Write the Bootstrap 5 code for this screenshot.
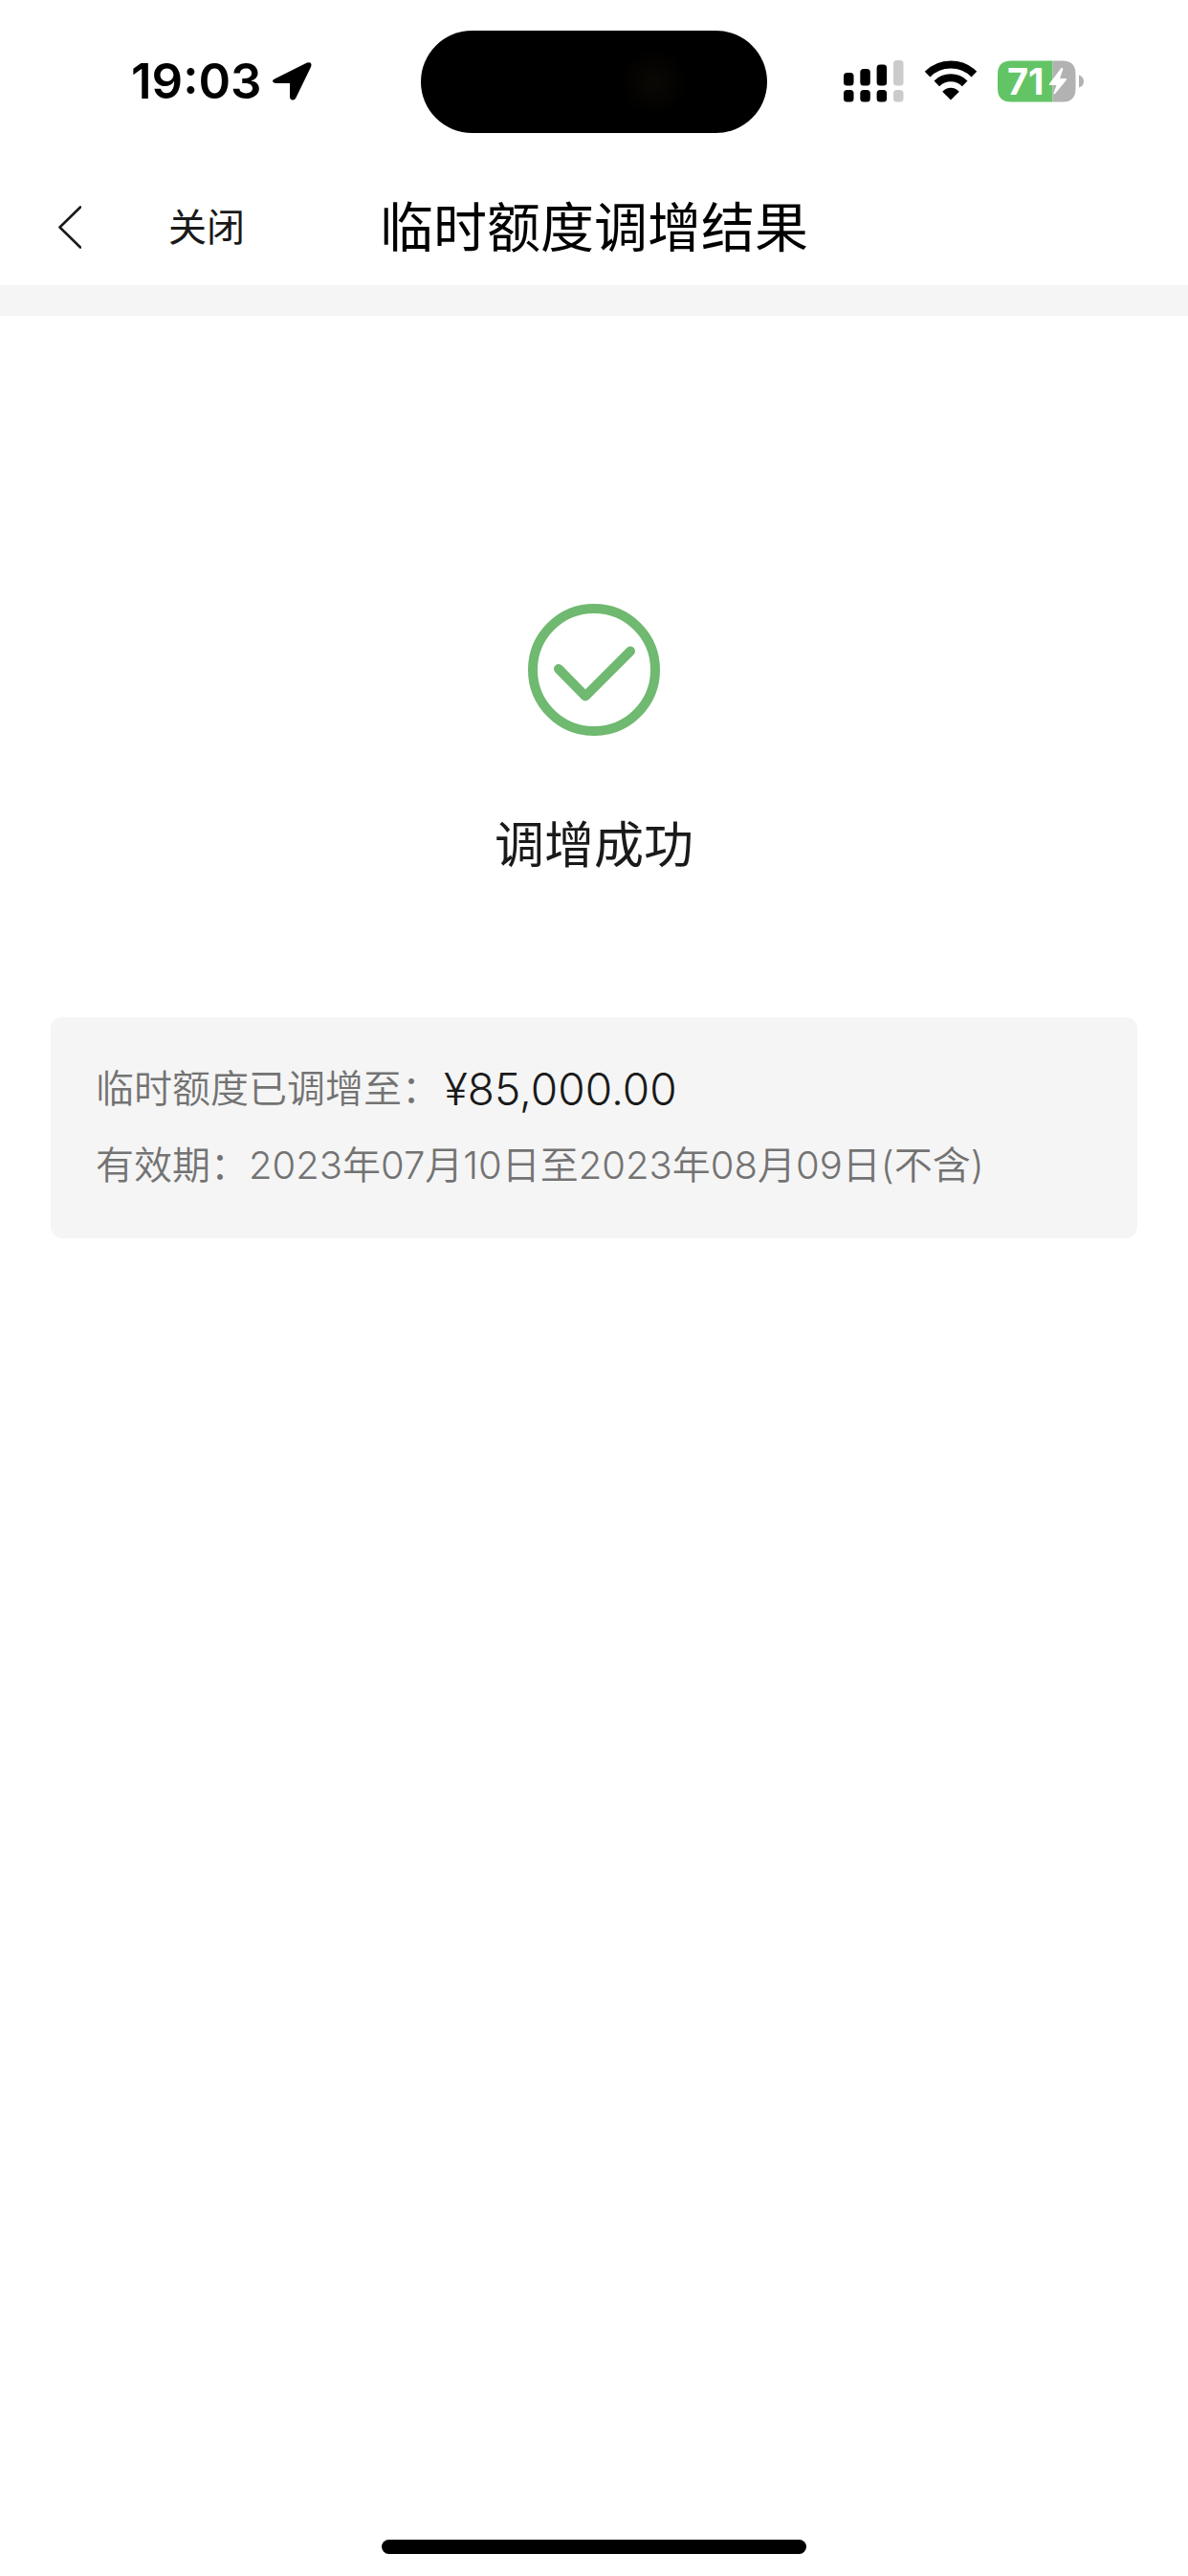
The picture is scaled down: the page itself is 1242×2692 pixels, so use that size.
<!DOCTYPE html>
<html lang="zh-CN">
<head>
<meta charset="utf-8">
<meta name="viewport" content="width=device-width, initial-scale=1">
<title>临时额度调增结果</title>
<link href="https://cdn.jsdelivr.net/npm/bootstrap@5.3.0/dist/css/bootstrap.min.css" rel="stylesheet">
<style>
  body { font-family: Inter, "Noto Sans CJK SC", sans-serif; color: #1a1a1a; background: #fff; }
  svg { display: block; flex: none; }
  .status-row { display: grid; grid-template-columns: 1fr auto 1fr; padding-top: 32px; height: 178px; color: #000; }
  .status-side { height: 106px; }
  .status-start { padding-left: 137px; gap: 11px; }
  .status-end { padding-left: 80px; gap: 21px; }
  .clock { font-size: 51px; line-height: 60px; font-weight: 600; }
  .island { width: 362px; height: 107px; background: radial-gradient(circle at 244px 54px, #0b0804 0, #000 36px); }
  .battery { width: 90px; height: 44px; }
  .battery-level { font-size: 38px; line-height: 44px; font-weight: 700; color: #fff; left: 10px; top: 0; }
  .title-row { display: grid; grid-template-columns: 1fr auto 1fr; height: 120px; }
  .title-actions { padding-left: 60px; gap: 91px; }
  .plain-btn { border: 0; background: none; padding: 0; color: #1a1a1a; font-size: 40px; line-height: 60px; }
  .page-title { font-size: 56px; line-height: 80px; font-weight: 400; color: #000; }
  .divider-band { height: 32px; background: #f5f5f5; }
  .result-block { padding-top: 300px; }
  .result-text { font-size: 52px; line-height: 80px; font-weight: 400; margin-top: 74px; }
  .detail-box { margin: 139px 53px 0; padding: 35px 47px 36px; background: #f5f5f5; border-radius: 12px; font-size: 40px; line-height: 80px; color: #737373; }
  .detail-box dt, .detail-box dd { font-weight: 350; }
  .detail-box .amount { font-size: 46px; color: #1a1a1a; padding-left: 4px; }
  .home-bar { width: 444px; height: 15px; background: #000; margin-bottom: 23px; }
</style>
</head>
<body>
<div class="min-vh-100 d-flex flex-column">
  <div class="status-row align-items-start">
    <div class="status-side status-start d-flex align-items-center">
      <span class="clock">19:03</span>
      <svg width="41" height="42" viewBox="0 0 41 42" aria-hidden="true"><path d="M3 18 36 1.500Q42 0 40 6L24.500 38Q23 41 20.500 40.500Q18 40 18 37V23H4Q0 22.500 0 20.500Q0 19 3 18Z"/></svg>
    </div>
    <div class="island rounded-pill"></div>
    <div class="status-side status-end d-flex align-items-center">
      <svg width="63" height="44" viewBox="0 0 63 44" aria-hidden="true">
        <g><rect x="0" y="13" width="10.500" height="13.500" rx="3.500"/><rect x="17.300" y="9" width="10.500" height="17.500" rx="3.500"/><rect x="34.600" y="4.500" width="10.500" height="22" rx="3.500"/><rect x="0" y="31" width="10.500" height="12.500" rx="3.500"/><rect x="17.300" y="31" width="10.500" height="12.500" rx="3.500"/><rect x="34.600" y="31" width="10.500" height="12.500" rx="3.500"/></g>
        <g fill="#cbcbcb"><rect x="52" y="0" width="10.500" height="26.500" rx="3.500"/><rect x="52" y="31" width="10.500" height="12.500" rx="3.500"/></g>
      </svg>
      <svg width="56" height="44" viewBox="0 0 56 44" aria-hidden="true">
        <path d="M3.600 14.600A34.500 34.500 0 0 1 52.400 14.600M13.300 24.300A21 21 0 0 1 42.700 24.300" fill="none" stroke="#000" stroke-width="8"/>
        <path d="M28 41.500 19.200 32.700Q23 28.800 28 28.800T36.800 32.700Z"/>
      </svg>
      <div class="battery position-relative">
        <svg width="90" height="44" viewBox="0 0 90 44" aria-hidden="true">
          <path d="M14 .5H57.500V43.500H14Q0 43.500 0 29.500V14.500Q0 .5 14 .5Z" fill="#63c466"/>
          <path d="M57.500 .5H68Q81.500 .5 81.500 14.500V29.500Q81.500 43.500 68 43.500H57.500Z" fill="#b2b2b2"/>
          <path d="M85 15.500Q90 17 90 22T85 28.500Z" fill="#b2b2b2"/>
          <path d="M66.500 8 54 24.500Q53.200 26 55 26H61.500L58.500 34.500Q58.600 36 60 35L72 20.500Q72.800 19 71 19H65L68.300 9.500Q68.300 7 66.500 8Z" fill="#fff"/>
        </svg>
        <span class="battery-level position-absolute">71</span>
      </div>
    </div>
  </div>

  <header class="title-row align-items-center">
    <div class="title-actions d-flex align-items-center">
      <button type="button" class="plain-btn" aria-label="返回">
        <svg width="25" height="46" viewBox="0 0 25 46" aria-hidden="true"><path d="M24 1.500 2.500 22.500 24 43.500" fill="none" stroke="#1a1a1a" stroke-width="2.600" stroke-linecap="round" stroke-linejoin="round"/></svg>
      </button>
      <button type="button" class="plain-btn">关闭</button>
    </div>
    <h1 class="page-title m-0">临时额度调增结果</h1>
  </header>
  <div class="divider-band"></div>

  <main class="flex-grow-1">
    <section class="result-block d-flex flex-column align-items-center">
      <svg width="140" height="140" viewBox="0 0 140 140" aria-hidden="true"><g fill="none" stroke="#6fb970" stroke-width="10"><circle cx="70" cy="70" r="64"/><path d="M33 69 61 97.500 108 50.500" stroke-linecap="round" stroke-linejoin="round"/></g></svg>
      <h2 class="result-text mb-0">调增成功</h2>
    </section>
    <dl class="detail-box">
      <div class="d-flex"><dt>临时额度已调增至：</dt><dd class="amount m-0">¥85,000.00</dd></div>
      <div class="d-flex"><dt>有效期：</dt><dd class="m-0">2023年07月10日至2023年08月09日(不含)</dd></div>
    </dl>
  </main>
  <div class="home-bar rounded-pill mx-auto"></div>
</div>
<script src="https://cdn.jsdelivr.net/npm/bootstrap@5.3.0/dist/js/bootstrap.bundle.min.js"></script>
</body>
</html>
